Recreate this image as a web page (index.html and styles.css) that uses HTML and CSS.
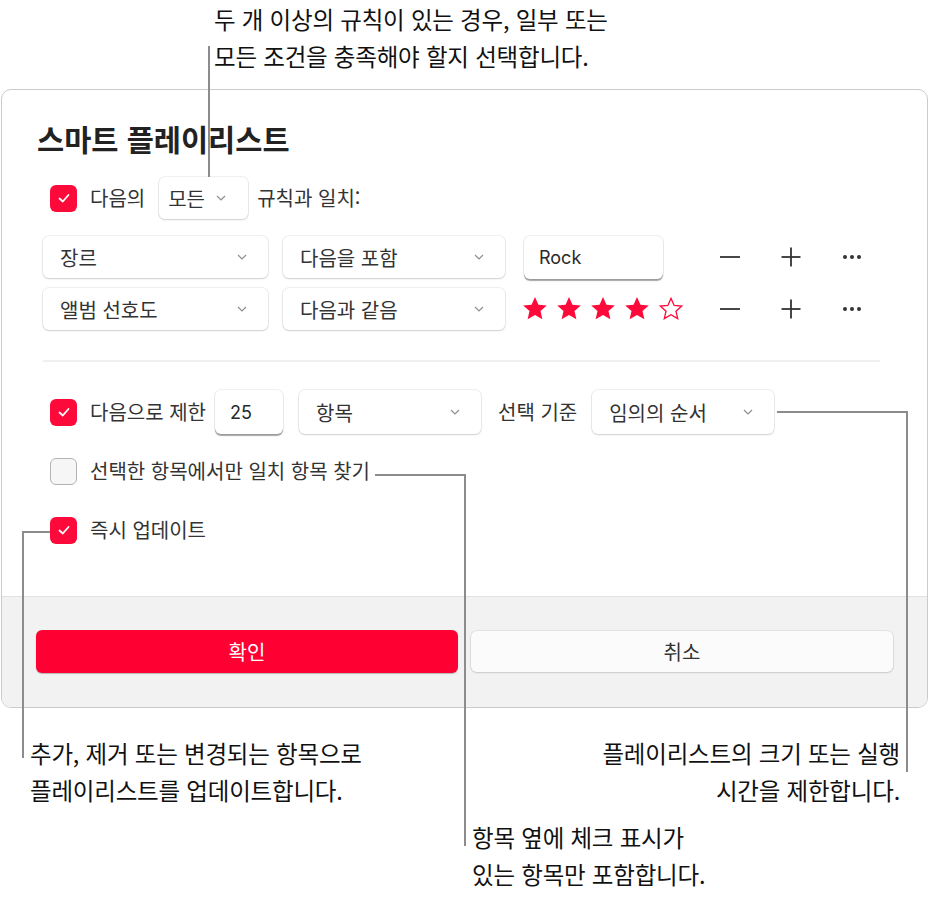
FILE: index.html
```html
<!DOCTYPE html>
<html lang="ko">
<head>
<meta charset="utf-8">
<title>스마트 플레이리스트</title>
<link rel="stylesheet" href="styles.css">
</head>
<body>
<div class="page">
  <div class="top-callout">
    <p class="callout">두 개 이상의 규칙이 있는 경우, 일부 또는<br>모든 조건을 충족해야 할지 선택합니다.</p>
  </div>

  <div class="dialog">
    <div class="dialog-body">
      <h1 class="title">스마트 플레이리스트</h1>

      <div class="match-row">
        <span class="checkbox checked"><svg viewBox="0 0 16 16" width="16" height="16"><polyline points="3.5,8.5 6.8,11.5 12.5,5" fill="none" stroke="#fff" stroke-width="1.8" stroke-linecap="round" stroke-linejoin="round"/></svg></span>
        <span class="label">다음의</span>
        <div class="select select-all"><span>모든</span><svg class="chev" viewBox="0 0 10 6" width="10" height="6"><polyline points="1,1 5,5 9,1" fill="none" stroke="#8e8e8e" stroke-width="1.2"/></svg></div>
        <span class="label">규칙과 일치:</span>
      </div>

      <div class="rules">
        <div class="rule">
          <div class="select select-field"><span>장르</span><svg class="chev" viewBox="0 0 10 6" width="10" height="6"><polyline points="1,1 5,5 9,1" fill="none" stroke="#8e8e8e" stroke-width="1.2"/></svg></div>
          <div class="select select-op"><span>다음을 포함</span><svg class="chev" viewBox="0 0 10 6" width="10" height="6"><polyline points="1,1 5,5 9,1" fill="none" stroke="#8e8e8e" stroke-width="1.2"/></svg></div>
          <div class="textfield rock">Rock</div>
          <div class="actions">
            <span class="icon"><svg viewBox="0 0 24 24" width="24" height="24"><line x1="2" y1="12" x2="22" y2="12" stroke="#333" stroke-width="1.8"/></svg></span>
            <span class="icon"><svg viewBox="0 0 24 24" width="24" height="24"><line x1="2.5" y1="12" x2="21.5" y2="12" stroke="#333" stroke-width="1.8"/><line x1="12" y1="2.5" x2="12" y2="21.5" stroke="#333" stroke-width="1.8"/></svg></span>
            <span class="icon"><svg viewBox="0 0 24 24" width="24" height="24"><circle cx="5" cy="12" r="2" fill="#333"/><circle cx="12" cy="12" r="2" fill="#333"/><circle cx="19" cy="12" r="2" fill="#333"/></svg></span>
          </div>
        </div>
        <div class="rule">
          <div class="select select-field"><span>앨범 선호도</span><svg class="chev" viewBox="0 0 10 6" width="10" height="6"><polyline points="1,1 5,5 9,1" fill="none" stroke="#8e8e8e" stroke-width="1.2"/></svg></div>
          <div class="select select-op"><span>다음과 같음</span><svg class="chev" viewBox="0 0 10 6" width="10" height="6"><polyline points="1,1 5,5 9,1" fill="none" stroke="#8e8e8e" stroke-width="1.2"/></svg></div>
          <div class="stars">
            <svg viewBox="0 0 24 24" width="26" height="26"><path class="star-fill" d="M12 1l3.2 7.1 7.7.7-5.8 5.1 1.7 7.6L12 17.5l-6.8 4 1.7-7.6-5.8-5.1 7.7-.7z"/></svg>
            <svg viewBox="0 0 24 24" width="26" height="26"><path class="star-fill" d="M12 1l3.2 7.1 7.7.7-5.8 5.1 1.7 7.6L12 17.5l-6.8 4 1.7-7.6-5.8-5.1 7.7-.7z"/></svg>
            <svg viewBox="0 0 24 24" width="26" height="26"><path class="star-fill" d="M12 1l3.2 7.1 7.7.7-5.8 5.1 1.7 7.6L12 17.5l-6.8 4 1.7-7.6-5.8-5.1 7.7-.7z"/></svg>
            <svg viewBox="0 0 24 24" width="26" height="26"><path class="star-fill" d="M12 1l3.2 7.1 7.7.7-5.8 5.1 1.7 7.6L12 17.5l-6.8 4 1.7-7.6-5.8-5.1 7.7-.7z"/></svg>
            <svg viewBox="0 0 24 24" width="26" height="26"><path class="star-empty" d="M12 2.2l2.9 6.5 7 .6-5.3 4.7 1.6 6.9L12 17.3l-6.2 3.6 1.6-6.9-5.3-4.7 7-.6z"/></svg>
          </div>
          <div class="actions">
            <span class="icon"><svg viewBox="0 0 24 24" width="24" height="24"><line x1="2" y1="12" x2="22" y2="12" stroke="#333" stroke-width="1.8"/></svg></span>
            <span class="icon"><svg viewBox="0 0 24 24" width="24" height="24"><line x1="2.5" y1="12" x2="21.5" y2="12" stroke="#333" stroke-width="1.8"/><line x1="12" y1="2.5" x2="12" y2="21.5" stroke="#333" stroke-width="1.8"/></svg></span>
            <span class="icon"><svg viewBox="0 0 24 24" width="24" height="24"><circle cx="5" cy="12" r="2" fill="#333"/><circle cx="12" cy="12" r="2" fill="#333"/><circle cx="19" cy="12" r="2" fill="#333"/></svg></span>
          </div>
        </div>
      </div>

      <div class="divider"></div>

      <div class="limit-row">
        <span class="checkbox checked"><svg viewBox="0 0 16 16" width="16" height="16"><polyline points="3.5,8.5 6.8,11.5 12.5,5" fill="none" stroke="#fff" stroke-width="1.8" stroke-linecap="round" stroke-linejoin="round"/></svg></span>
        <span class="label">다음으로 제한</span>
        <div class="textfield num">25</div>
        <div class="select select-unit"><span>항목</span><svg class="chev" viewBox="0 0 10 6" width="10" height="6"><polyline points="1,1 5,5 9,1" fill="none" stroke="#8e8e8e" stroke-width="1.2"/></svg></div>
        <span class="label">선택 기준</span>
        <div class="select select-order"><span>임의의 순서</span><svg class="chev" viewBox="0 0 10 6" width="10" height="6"><polyline points="1,1 5,5 9,1" fill="none" stroke="#8e8e8e" stroke-width="1.2"/></svg></div>
      </div>

      <div class="check-row row-selected">
        <span class="checkbox"></span>
        <span class="label">선택한 항목에서만 일치 항목 찾기</span>
      </div>

      <div class="check-row row-live">
        <span class="checkbox checked"><svg viewBox="0 0 16 16" width="16" height="16"><polyline points="3.5,8.5 6.8,11.5 12.5,5" fill="none" stroke="#fff" stroke-width="1.8" stroke-linecap="round" stroke-linejoin="round"/></svg></span>
        <span class="label">즉시 업데이트</span>
      </div>
    </div>

    <div class="dialog-footer">
      <button class="btn btn-primary">확인</button>
      <button class="btn btn-secondary">취소</button>
    </div>
  </div>

  <div class="bottom-callouts">
    <p class="callout bc-left">추가, 제거 또는 변경되는 항목으로<br>플레이리스트를 업데이트합니다.</p>
    <p class="callout bc-right">플레이리스트의 크기 또는 실행<br>시간을 제한합니다.</p>
    <p class="callout bc-mid">항목 옆에 체크 표시가<br>있는 항목만 포함합니다.</p>
  </div>

  <svg class="leaders" width="931" height="899" viewBox="0 0 931 899">
    <polyline points="209,46 209,177" />
    <polyline points="50,532 23,532 23,758" />
    <polyline points="375,475 465,475 465,846" />
    <polyline points="777,412 907,412 907,772" />
  </svg>
</div>
</body>
</html>
```

FILE: styles.css
```css
html, body {
  margin: 0;
  padding: 0;
  background: #ffffff;
}

body {
  font-family: "Noto Sans CJK KR", "Noto Sans", sans-serif;
  color: #1d1d1f;
}

.page {
  position: relative;
  width: 931px;
  height: 899px;
  overflow: hidden;
}

.callout {
  margin: 0;
  font-size: 23.5px;
  line-height: 37px;
  color: #111;
  letter-spacing: -0.2px;
}

.top-callout {
  height: 89px;
  box-sizing: border-box;
  padding: 1px 0 0 214px;
}

.dialog {
  margin-left: 1px;
  width: 927px;
  box-sizing: border-box;
  border: 1px solid #cbcbcb;
  border-radius: 10px;
  background: #ffffff;
  overflow: hidden;
}

.dialog-body {
  padding: 30px 0 52px 0;
  color: #333;
  font-size: 20px;
}

.title {
  margin: 0 0 0 35px;
  font-size: 29.5px;
  line-height: 36px;
  font-weight: 700;
  color: #222;
}

.label {
  white-space: nowrap;
  line-height: 26px;
}

.checkbox {
  width: 27px;
  height: 27px;
  box-sizing: border-box;
  border-radius: 6px;
  background: #f6f6f6;
  border: 1px solid #b3b3b3;
  display: flex;
  align-items: center;
  justify-content: center;
  flex: none;
}

.checkbox.checked {
  background: #fe0a3a;
  border: none;
}

.match-row {
  display: flex;
  align-items: center;
  margin: 21px 0 0 48px;
  height: 42px;
}

.match-row .checkbox { margin-right: 13px; }
.match-row .select-all { margin: 0 9px 0 14px; }

.select {
  display: flex;
  align-items: center;
  justify-content: space-between;
  height: 42px;
  box-sizing: border-box;
  padding: 0 21px 0 17px;
  background: #fff;
  border-radius: 6px;
  box-shadow: 0 0 0 1px rgba(0, 0, 0, 0.06), 0 1px 2px rgba(0, 0, 0, 0.14);
  white-space: nowrap;
  flex: none;
}

.select-all {
  width: 89px;
  padding: 0 22px 0 9px;
}

.rules {
  margin: 17px 0 0 41px;
  display: flex;
  flex-direction: column;
  gap: 10px;
}

.rule {
  display: flex;
  align-items: center;
  height: 42px;
}

.select-field { width: 225px; margin-right: 15px; }
.select-op { width: 222px; margin-right: 19px; }

.textfield {
  height: 43px;
  box-sizing: border-box;
  background: #fff;
  border-radius: 6px;
  box-shadow: 0 0 0 1px rgba(0, 0, 0, 0.06), 0 1.5px 1px rgba(0, 0, 0, 0.35);
  display: flex;
  align-items: center;
  flex: none;
}

.rock {
  width: 139px;
  padding-left: 15px;
  font-family: "Inter", "Noto Sans", sans-serif;
  font-size: 18px;
  color: #2a2a2a;
}

.stars {
  width: 139px;
  display: flex;
  gap: 8px;
  margin-left: -2px;
  margin-right: 2px;
  flex: none;
}

.stars svg { flex: none; }

.star-fill { fill: #fe0a3a; }
.star-empty { fill: none; stroke: #fe0a3a; stroke-width: 1.2; stroke-linejoin: miter; }

.actions {
  display: flex;
  margin-left: 52px;
  gap: 31px;
}

.icon {
  width: 30px;
  height: 30px;
  display: flex;
  align-items: center;
  justify-content: center;
}

.divider {
  margin: 30px 0 0 41px;
  width: 837px;
  height: 2px;
  background: #f0f0f0;
}

.limit-row {
  display: flex;
  align-items: center;
  margin: 28px 0 0 48px;
  height: 44px;
}

.limit-row .checkbox { margin-right: 13px; }
.limit-row .num {
  width: 68px;
  height: 44px;
  padding-left: 15px;
  margin: 0 16px 0 9px;
  font-family: "Inter", "Noto Sans", sans-serif;
  font-size: 18px;
  color: #2a2a2a;
}
.select-unit { width: 182px; height: 44px; margin-right: 17px; }
.select-order { width: 182px; height: 44px; margin-left: 15px; }

.check-row {
  display: flex;
  align-items: center;
  gap: 13px;
  margin-left: 48px;
  height: 28px;
}

.row-selected { margin-top: 23px; }
.row-live { margin-top: 31px; }

.dialog-footer {
  background: #f2f2f2;
  border-top: 1px solid #e2e2e2;
  padding: 33px 34px 34px 34px;
  display: flex;
  gap: 13px;
}

.btn {
  flex: 1;
  height: 43px;
  border: none;
  border-radius: 6px;
  font-family: "Noto Sans CJK KR", "Noto Sans", sans-serif;
  font-size: 20px;
  padding: 0;
}

.btn-primary {
  background: #ff0033;
  color: #fff;
  box-shadow: 0 1px 1px rgba(0, 0, 0, 0.25);
}

.btn-secondary {
  background: #fbfbfb;
  color: #333;
  height: 41px;
  margin-top: 1px;
  box-shadow: 0 0 0 1px rgba(0, 0, 0, 0.06), 0 1px 2px rgba(0, 0, 0, 0.12);
}

.bottom-callouts {
  display: grid;
  grid-template-columns: 1fr 1fr;
  padding: 27px 31px 0 30px;
}

.bc-left { grid-column: 1; grid-row: 1; }
.bc-right { grid-column: 2; grid-row: 1; text-align: right; }
.bc-mid { grid-column: 2; grid-row: 2; margin: 10px 0 0 7px; }

.leaders {
  position: absolute;
  left: 0;
  top: 0;
  pointer-events: none;
}

.leaders polyline {
  fill: none;
  stroke: #8c8c8c;
  stroke-width: 2;
}
```
